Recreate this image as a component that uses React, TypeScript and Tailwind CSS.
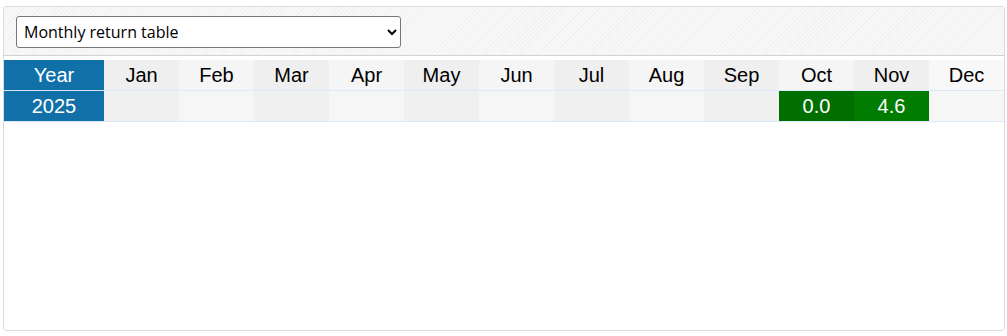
const months = ["Jan", "Feb", "Mar", "Apr", "May", "Jun", "Jul", "Aug", "Sep", "Oct", "Nov", "Dec"]

// Monthly returns for 2025, null where the month has no data yet
const returns2025: (number | null)[] = [null, null, null, null, null, null, null, null, null, 0.0, 4.6, null]

const headBg = ["bg-[#efefef]", "bg-[#f5f5f5]"]
const cellBg = ["bg-[#f0f0f0]", "bg-[#f6f6f6]"]

function valueBg(v: number, i: number) {
  if (v === 0) return "bg-[#006f00]"
  return i % 2 === 0 ? "bg-[#007d00]" : "bg-[#008000]"
}

export default function App() {
  return (
    <div className="pt-[6px] pl-[3px] font-['Liberation_Sans',Arial,sans-serif]">
      <div className="w-[1002px] h-[325px] border border-[#dcdcdc] rounded-[3px] bg-white overflow-hidden">
        <div className="h-[49px] border-b border-[#d2d2d2] pl-3 pt-[9px] bg-[repeating-linear-gradient(135deg,#f8f8f8_0px,#f8f8f8_2px,#f1f1f1_2px,#f1f1f1_3px)]">
          <select
            defaultValue="monthly"
            className="w-[385px] h-[32px] bg-white border border-[#767676] rounded-[3px] pl-[3px] pr-2 text-[16px] text-black font-['Open_Sans','Noto_Sans',sans-serif]"
          >
            <option value="monthly">Monthly return table</option>
            <option value="yearly">Yearly return table</option>
          </select>
        </div>

        <div className="mt-[4px] grid grid-cols-[100px_repeat(12,75px)] text-[20px] leading-none">
          <div className="h-[31px] flex items-center justify-center bg-[#1170a8] text-white border-b border-[#d8e6f5]">Year</div>
          {months.map((m, i) => (
            <div
              key={m}
              className={`h-[31px] flex items-center justify-center text-black border-b border-[#dde9f8] ${i === 11 ? "bg-[#f8f8f8]" : headBg[i % 2]}`}
            >
              {m}
            </div>
          ))}

          <div className="h-[31px] flex items-center justify-center bg-[#1170a8] text-white border-b border-[#dde9f8]">2025</div>
          {returns2025.map((v, i) => (
            <div
              key={i}
              className={`h-[31px] flex items-center justify-center text-white border-b border-[#dde9f8] ${v === null ? cellBg[i % 2] : valueBg(v, i)}`}
            >
              {v === null ? "" : v.toFixed(1)}
            </div>
          ))}
        </div>
      </div>
    </div>
  )
}
